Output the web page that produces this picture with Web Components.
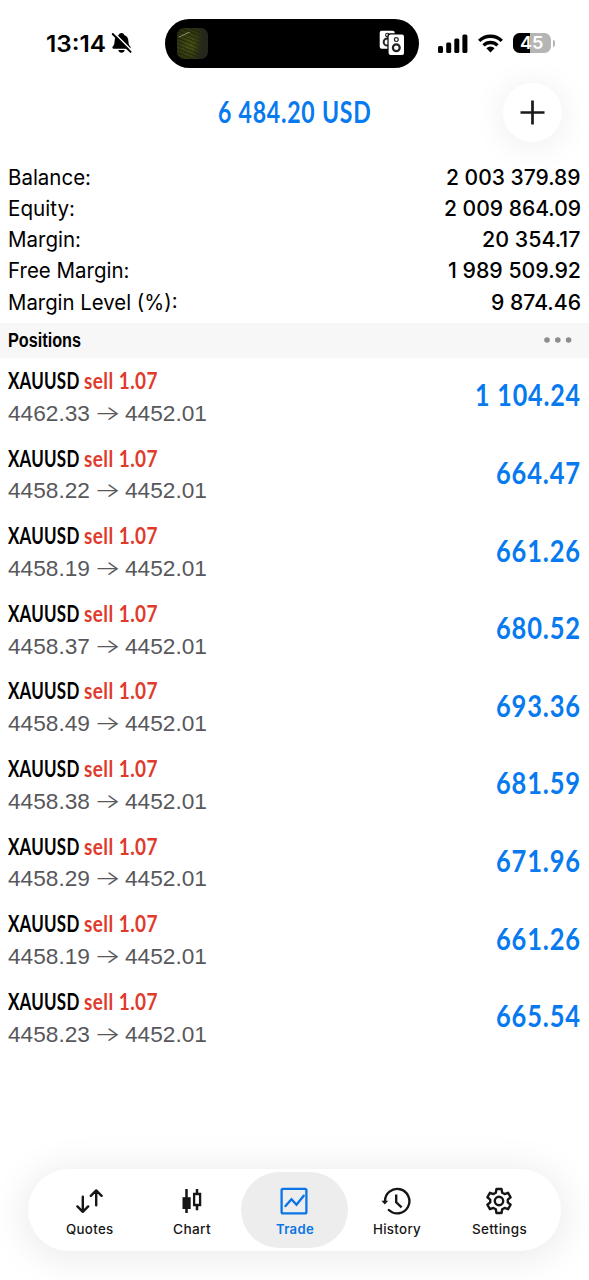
<!DOCTYPE html>
<html lang="en">
<head>
<meta charset="utf-8">
<title>Trade</title>
<style>
html,body{margin:0;background:#fff;height:100%;overflow:hidden}
body{font-family:Inter,"Liberation Sans",sans-serif;color:#000}
</style>
</head>
<body>
<trade-app></trade-app>
<script>
const define = (name, html, setup) => {
  const tpl = document.createElement('template');
  tpl.innerHTML = html;
  customElements.define(name, class extends HTMLElement {
    connectedCallback() {
      if (this.shadowRoot) return;
      this.attachShadow({mode: 'open'}).append(tpl.content.cloneNode(true));
      if (setup) setup(this, this.shadowRoot);
    }
  });
};

/* A single line of text condensed or widened to the width given in "w". */
define('fit-text', `<style>
:host{display:block;flex:none;white-space:nowrap}
span{display:inline-block;transform-origin:0 50%;white-space:pre}
</style><span><slot></slot></span>`, (el, root) => {
  const w = parseFloat(el.getAttribute('w'));
  const span = root.querySelector('span');
  el.style.width = w + 'px';
  const fit = () => {
    span.style.transform = 'none';
    const n = span.getBoundingClientRect().width;
    if (n) span.style.transform = 'scaleX(' + w / n + ')';
  };
  fit();
  requestAnimationFrame(fit);
});

define('status-bar', `<style>
:host{display:block;height:80px;box-sizing:border-box;padding:18.5px 0 0 46px}
.bar{display:flex;align-items:center;height:49.5px}
fit-text{font-weight:600;font-size:22.6px;line-height:30px}
.time{margin-top:2px}
svg{display:block;flex:none}
.bell{margin-left:5px}
.island{width:253.5px;height:49.5px;margin-left:33px;border-radius:25px;background:#000;display:flex;align-items:center;justify-content:space-between;padding:0 14px 0 12px;box-sizing:border-box}
.art{width:31px;height:31px;border-radius:7px;background:
 linear-gradient(100deg,transparent 55%,#25271c 80%),
 linear-gradient(155deg,transparent 22%,#8c9470 27%,transparent 32%) 2px 4px/14px 12px no-repeat,
 repeating-linear-gradient(22deg,#0000 0 2px,#10130366 2px 3.4px),
 radial-gradient(ellipse at 45% 55%,#4b5216 0,#343b12 50%,#20260f 100%)}
.signal{margin-left:19.5px}.wifi{margin-left:10px}.bat{margin-left:10px}
.bat{display:flex;align-items:center}
.cell{width:38px;height:20px;border-radius:6.5px;background:linear-gradient(90deg,#000 17px,#b5b5b5 17px);display:flex;align-items:center;justify-content:center;color:#fff}
.cell fit-text{font-size:17.5px;font-weight:600;line-height:20px}
.nub{width:2px;height:7px;margin-left:1.5px;border-radius:0 3px 3px 0;background:#b5b5b5}
</style>
<div class="bar">
<fit-text class="time" w="60">13:14</fit-text>
<svg class="bell" width="21" height="22" viewBox="0 0 21 22"><path d="M10.500 1c1.500 0 2.500.8 2.700 1.900 2.800 1 4.100 3.200 4.200 6 .1 3 .6 4.200 1.700 5.300.9.900.6 2.600-.8 2.600H2.700c-1.400 0-1.700-1.700-.8-2.600 1.100-1.100 1.600-2.300 1.700-5.300.1-2.800 1.400-5 4.200-6C8 1.800 9 1 10.500 1zM7.300 18.100h6.400c-.3 1.700-1.500 2.700-3.200 2.700s-2.900-1-3.200-2.700z"/><path d="M3 .9 20.500 18.400" stroke="#fff" stroke-width="1.500"/><path d="M1.700 2 19.600 19.900" stroke="#000" stroke-width="1.900" stroke-linecap="round"/></svg>
<div class="island"><div class="art"></div>
<svg width="26" height="26" viewBox="0 0 26 26"><rect x=".7" y=".8" width="15" height="18" rx="2" fill="#fff"/><circle cx="8.300" cy="5" r="1.700" fill="none" stroke="#222" stroke-width="1.100"/><circle cx="8.300" cy="12" r="3.600" fill="none" stroke="#222" stroke-width="2"/><rect x="8.400" y="3.300" width="17.800" height="23" rx="2.800" fill="#000"/><rect x="9.600" y="4.500" width="15.400" height="20.500" rx="2" fill="#fff"/><circle cx="17.300" cy="9.600" r="1.900" fill="none" stroke="#222" stroke-width="1.200"/><circle cx="17.300" cy="17.800" r="3.400" fill="none" stroke="#222" stroke-width="2.200"/></svg></div>
<svg class="signal" width="30" height="19" viewBox="0 0 30 19"><rect x="0" y="12" width="5" height="7" rx="1.500"/><rect x="8.200" y="8.500" width="5" height="10.500" rx="1.500"/><rect x="16.300" y="4.500" width="5" height="14.500" rx="1.500"/><rect x="24.400" y=".5" width="5" height="18.500" rx="1.500"/></svg>
<svg class="wifi" width="25" height="19" viewBox="0 0 25 19"><g fill="none" stroke="#000" stroke-width="3.300"><path d="M1.200 6.900a16 16 0 0 1 22.600 0"/><path d="M5.500 11.400a9.900 9.900 0 0 1 14 0"/></g><path d="M8.400 14.300a5.800 5.800 0 0 1 8.200 0L12.500 18.500z"/></svg>
<div class="bat"><div class="cell"><fit-text w="23.5">45</fit-text></div><div class="nub"></div></div>
</div>`);

define('account-header', `<style>
:host{display:grid;grid-template-columns:1fr 154px 1fr;align-items:center;height:65px;color:#077af0}
fit-text{grid-column:2;font:700 29.5px/36px Lato,sans-serif;letter-spacing:1px;margin:-2px 0 0 0}
button{grid-column:3;justify-self:end;margin:-10px 27px -10px 0;width:59px;height:59px;border:0;padding:0;border-radius:50%;background:#fff;box-shadow:0 3px 32px 4px rgba(0,0,0,.06);display:grid;place-items:center}
</style><fit-text w="153.5"><slot></slot></fit-text>
<button aria-label="New order"><svg width="25" height="25" viewBox="0 0 25 25"><path d="M12.500.5v24M.5 12.500h24" stroke="#1a1a1a" stroke-width="2.700"/></svg></button>`);

define('summary-row', `<style>
:host{display:flex;justify-content:space-between;align-items:center;height:31.2px;padding:0 8.500px 0 8px;font-size:21px;line-height:31.200px}
.v{font-weight:450}
</style><fit-text class="l"></fit-text><fit-text class="v"></fit-text>`);

define('section-bar', `<style>
:host{display:flex;align-items:center;justify-content:space-between;height:35px;background:#f7f7f7;padding:0 17px 0 8px}
fit-text{font:700 20px/35px "Liberation Sans",sans-serif;padding-top:1px}
</style><fit-text w="73"><slot></slot></fit-text>
<svg width="28" height="6" viewBox="0 0 28 6" fill="#8c8c8c"><circle cx="3" cy="3" r="2.800"/><circle cx="13.800" cy="3" r="2.800"/><circle cx="24.600" cy="3" r="2.800"/></svg>`);

const make = (tag, text, w, cls) => {
  const e = document.createElement(tag);
  if (w) e.setAttribute('w', w);
  if (cls) e.className = cls;
  e.textContent = text;
  return e;
};

customElements.define('position-row', class extends HTMLElement {
  connectedCallback() {
    if (this.shadowRoot) return;
    const root = this.attachShadow({mode: 'open'});
    root.innerHTML = `<style>
:host{display:flex;justify-content:space-between;height:77.620px;padding:0 8px;box-sizing:border-box}
.info{padding-top:7.300px}
.line{display:flex;height:32.200px;align-items:center}
.sym,.side{font:700 22.500px/32px Lato,sans-serif}
.side{margin-left:4.200px;color:#df3b2d;letter-spacing:.500px}
.sym{letter-spacing:.300px}
.price{font:400 22.500px/32px "Liberation Sans",sans-serif;color:#58585c;padding-top:1px}
.arrow{font:300 20px/32px Inter,sans-serif;color:#58585c;margin:-1px 4px 0 4px}
.profit{font:700 30px/36px Lato,sans-serif;letter-spacing:1px;color:#077af0;margin-top:18.800px}
</style><div class="info"><div class="line a"></div><div class="line b"></div></div>`;
    const a = root.querySelector('.a'), b = root.querySelector('.b');
    a.append(make('fit-text', 'XAUUSD', 71.5, 'sym'), make('fit-text', 'sell 1.07', 74, 'side'));
    b.append(make('fit-text', this.getAttribute('open'), 82, 'price'), make('fit-text', '→', 27, 'arrow'), make('fit-text', '4452.01', 82, 'price'));
    const p = this.getAttribute('profit');
    root.append(make('fit-text', p, p.length > 6 ? 106 : 85, 'profit'));
  }
});

define('tab-item', `<style>
:host{display:flex;flex-direction:column;align-items:center;width:107px;height:76px;border-radius:38px;color:#161616;box-sizing:border-box;padding-top:14px}
:host([active]){background:#ededed;color:#0a74e6}
.icon{height:29px;display:grid;place-items:center}
fit-text{font-size:13px;letter-spacing:.300px;line-height:18px;font-weight:500;margin-top:5px}
:host([active]) fit-text{font-weight:600}
</style><div class="icon"><slot name="icon"></slot></div>`, (el, root) => {
  root.append(make('fit-text', el.getAttribute('label'), el.getAttribute('w')));
});

/* Outline of a six-toothed gear centred on (14, 14). */
const gear = () => {
  const pts = [];
  for (let k = 0; k < 6; k++)
    for (const [d, r] of [[-21, 8.9], [-12, 12.2], [12, 12.2], [21, 8.9]]) {
      const t = (k * 60 + d - 90) * Math.PI / 180;
      pts.push((14 + r * Math.cos(t)).toFixed(2) + ' ' + (14 + r * Math.sin(t)).toFixed(2));
    }
  return 'M' + pts.join('L') + 'z';
};

define('tab-bar', `<style>
:host{display:flex;align-items:center;width:533px;height:82px;margin:0 auto;border-radius:41px;background:#fff;box-shadow:0 4px 36px 6px rgba(0,0,0,.075);box-sizing:border-box;padding-left:10.250px}
tab-item{margin:0 -2.250px;flex:none}
svg{display:block;fill:none;stroke:currentColor;margin-left:-1px;margin-right:1px}
</style>
<tab-item label="Quotes" w="47.5"><svg slot="icon" width="28" height="28" viewBox="0 0 28 28" stroke-width="2.400" stroke-linejoin="round" stroke-linecap="round"><path d="M7.800 9.800v15M2.400 19.400l5.400 5.400 5.400-5.400M21.200 18.200V3.500M15.800 8.800l5.400-5.400L26.600 8.800"/></svg></tab-item>
<tab-item label="Chart" w="38"><svg slot="icon" width="28" height="28" viewBox="0 0 28 28" stroke-width="2.500"><path d="M9.500 2v24M20 2v5M20 18v5.300"/><path d="M5.500 10.200h8.200v11.800h-8.200z" fill="currentColor" stroke="none"/><path d="M17.100 7h6v11h-6z" stroke-width="2.300"/></svg></tab-item>
<tab-item label="Trade" w="38" active><svg slot="icon" width="28" height="28" viewBox="0 0 28 28" stroke-width="2.300"><rect x="1.600" y="1.800" width="24.800" height="24.600" rx="1.400"/><path d="m5.500 19 6-6.800 5 5.500 7.200-9" stroke-width="2.400" stroke-linecap="round"/></svg></tab-item>
<tab-item label="History" w="48"><svg slot="icon" width="30" height="28" viewBox="0 0 30 28" stroke-width="2.400"><path d="M4 14.500a12.200 12.200 0 1 1 3.800 8.500" stroke-linecap="round"/><path d="M15.200 7.500v7.800l5.400 5"/><path d="M.4 13.700h6.900L3.800 17.600z" fill="currentColor" stroke="none"/></svg></tab-item>
<tab-item label="Settings" w="55"><svg slot="icon" width="28" height="28" viewBox="0 0 28 28" stroke-width="2.400" stroke-linejoin="round"><path d="${gear()}"/><circle cx="14" cy="14" r="4.200"/></svg></tab-item>`);

customElements.define('trade-app', class extends HTMLElement {
  connectedCallback() {
    if (this.shadowRoot) return;
    const root = this.attachShadow({mode: 'open'});
    root.innerHTML = `<style>
:host{display:flex;flex-direction:column;width:589px;height:1280px;overflow:hidden;background:#fff}
status-bar,account-header,section-bar,tab-bar,position-row,summary-row{flex:none}
.summary{padding:16.800px 0 4.900px}
.list{flex:1}
tab-bar{margin-bottom:29px!important}
</style><status-bar></status-bar><account-header>6 484.20 USD</account-header>
<div class="summary"></div><section-bar>Positions</section-bar><div class="list"></div><tab-bar></tab-bar>`;
    const summary = root.querySelector('.summary');
    [['Balance:', 83, '2 003 379.89', 134.5], ['Equity:', 67, '2 009 864.09', 137], ['Margin:', 73, '20 354.17', 98.5],
     ['Free Margin:', 121.5, '1 989 509.92', 133], ['Margin Level (%):', 169.5, '9 874.46', 90]].forEach(([l, lw, v, vw]) => {
      const row = document.createElement('summary-row');
      summary.append(row);
      const [a, b] = row.shadowRoot.querySelectorAll('fit-text');
      a.replaceWith(make('fit-text', l, lw));
      b.replaceWith(make('fit-text', v, vw, 'v'));
    });
    const list = root.querySelector('.list');
    [['4462.33', '1 104.24'], ['4458.22', '664.47'], ['4458.19', '661.26'], ['4458.37', '680.52'], ['4458.49', '693.36'],
     ['4458.38', '681.59'], ['4458.29', '671.96'], ['4458.19', '661.26'], ['4458.23', '665.54']].forEach(([o, p]) => {
      const row = document.createElement('position-row');
      row.setAttribute('open', o);
      row.setAttribute('profit', p);
      list.append(row);
    });
  }
});
</script>
</body>
</html>
